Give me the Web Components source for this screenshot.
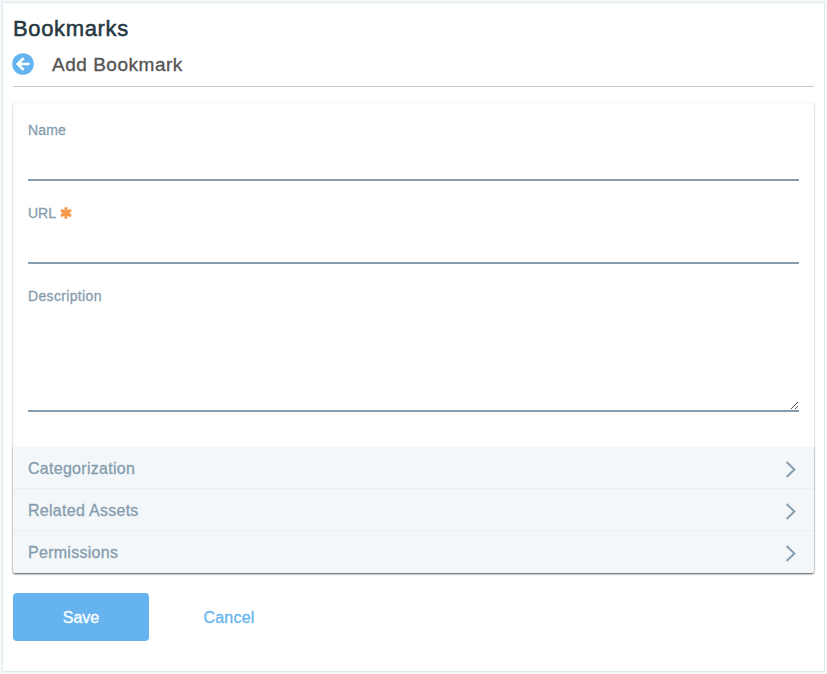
<!DOCTYPE html>
<html lang="en">
<head>
<meta charset="utf-8">
<title>Bookmarks</title>
<style>
html, body { margin: 0; height: 100%; }
body { background: #f5f7f8; font-family: "Liberation Sans", Arial, sans-serif; box-sizing: border-box; padding: 2px; overflow: hidden; }
</style>
</head>
<body>
<bookmark-page></bookmark-page>
<script>
const define = (name, html) => customElements.define(name, class extends HTMLElement {
  connectedCallback() {
    if (this.shadowRoot) return;
    const root = this.attachShadow({ mode: 'open' });
    const t = document.createElement('template');
    t.innerHTML = html;
    root.append(t.content.cloneNode(true));
  }
});

define('page-header', `
<style>
:host { display: block; height: 83px; border-bottom: 1px solid #c8c8c8; }
h1 { margin: 0; padding-top: 13px; font-size: 22px; line-height: 26px; font-weight: 400; letter-spacing: .65px; color: #25373f; -webkit-text-stroke: .5px; }
.row { display: flex; align-items: center; height: 24px; margin-top: 10px; margin-left: -1px; }
svg { width: 22px; height: 22px; flex: none; }
h2 { margin: 0 0 0 18px; padding-top: 2px; font-size: 19px; line-height: 24px; font-weight: 400; letter-spacing: .52px; color: #555; -webkit-text-stroke: .35px; }
</style>
<h1><slot name="title"></slot></h1>
<div class="row">
<svg viewBox="0 0 22 22"><circle cx="11" cy="11" r="10.8" fill="#65b4f0"/><path d="M17.6 11H6.4M11.6 5.1L5.7 11l5.9 5.9" fill="none" stroke="#fff" stroke-width="2.6"/></svg>
<h2><slot></slot></h2></div>`);

define('required-mark', `
<style>:host { display: block; width: 12px; height: 12px; margin-left: 4px; } svg { display: block; }</style>
<svg width="12" height="12" viewBox="0 0 12 12"><path d="M6 .2v11.6M1 3.1l10 5.8M11 3.1L1 8.9" stroke="#f8994b" stroke-width="3"/></svg>`);

define('form-field', `
<style>
:host { display: block; height: 83px; color: #869cad; }
:host([multiline]) { height: 148px; }
.label { display: flex; align-items: center; height: 20px; font-size: 14px; line-height: 20px; letter-spacing: var(--track, .15px); -webkit-text-stroke: .3px; }
.control { position: relative; height: 39px; border-bottom: 2px solid #869cad; }
:host([multiline]) .control { height: 104px; }
input, textarea { display: block; box-sizing: border-box; width: 100%; height: 100%; border: 0; padding: 0; background: none; outline: 0; resize: none; font: 16px "Liberation Sans", sans-serif; }
textarea, .grip { display: none; }
:host([multiline]) input { display: none; }
:host([multiline]) textarea { display: block; }
:host([multiline]) .grip { display: block; position: absolute; right: 1px; bottom: 1px; }
</style>
<label><div class="label"><slot></slot><slot name="mark"></slot></div>
<div class="control"><input><textarea></textarea>
<svg class="grip" width="7" height="7" viewBox="0 0 7 7" shape-rendering="crispEdges" fill="#555"><path d="M6 0h1v1H6zM5 1h1v1H5zM4 2h1v1H4zM3 3h1v1H3zM2 4h1v1H2zM1 5h1v1H1zM0 6h1v1H0zM6 4h1v1H6zM5 5h1v1H5zM4 6h1v1H4z"/></svg></div></label>`);

define('collapsed-section', `
<style>
:host { display: flex; box-sizing: border-box; height: 42px; padding: 1px 18px 0 15px; align-items: center; justify-content: space-between; background: #f3f7fa; border-top: 1px solid #e9f0f3; color: #869cad; font-size: 16px; line-height: 20px; letter-spacing: .28px; -webkit-text-stroke: .3px; }
span { padding-top: 1px; }
svg { display: block; margin-top: 2px; }
</style>
<span><slot></slot></span>
<svg width="11" height="17" viewBox="0 0 11 17"><path d="M1.6 1l7.8 7.5L1.6 16" fill="none" stroke="#869cad" stroke-width="1.9"/></svg>`);

define('form-card', `
<style>
:host { display: block; box-sizing: border-box; height: 470px; margin-top: 16px; background: #fff; border-radius: 3px; box-shadow: 0 1px 2px rgba(0,0,0,.38), 0 0 1px rgba(0,0,0,.15); }
.fields { height: 344px; box-sizing: border-box; padding: 17px 15px 0; }
.sections { height: 126px; background: #f3f7fa; border-radius: 0 0 2px 2px; box-shadow: 0 1px 2px rgba(0,0,0,.4); }
::slotted(collapsed-section:first-of-type), ::slotted(.first) { height: 41px; border-top-width: 0; }
::slotted(collapsed-section:last-of-type) { border-radius: 0 0 2px 2px; }
</style>
<div class="fields"><slot></slot></div>
<div class="sections"><slot name="sections"></slot></div>`);

define('form-button', `
<style>
:host { display: flex; box-sizing: border-box; align-items: center; justify-content: center; padding-top: 2px; height: 48px; width: 136px; border-radius: 4px; font-size: 16px; line-height: 20px; letter-spacing: .2px; color: #65b4f0; -webkit-text-stroke: .3px; }
:host([primary]) { background: #65b4f0; color: #fff; letter-spacing: 0; }
</style><slot></slot>`);

define('bookmark-page', `
<style>
:host { display: block; box-sizing: border-box; width: 823px; height: 670px; padding: 0 10px; border: 1px solid #dcebee; background: #fff; }
.actions { display: flex; gap: 12px; margin-top: 20px; }
</style>
<page-header><span slot="title">Bookmarks</span>Add Bookmark</page-header>
<form-card>
<form-field>Name</form-field>
<form-field style="--track:0px">URL<required-mark slot="mark"></required-mark></form-field>
<form-field multiline style="--track:.34px">Description</form-field>
<collapsed-section slot="sections">Categorization</collapsed-section>
<collapsed-section slot="sections">Related Assets</collapsed-section>
<collapsed-section slot="sections">Permissions</collapsed-section>
</form-card>
<div class="actions"><form-button primary>Save</form-button><form-button>Cancel</form-button></div>`);
</script>
</body>
</html>
